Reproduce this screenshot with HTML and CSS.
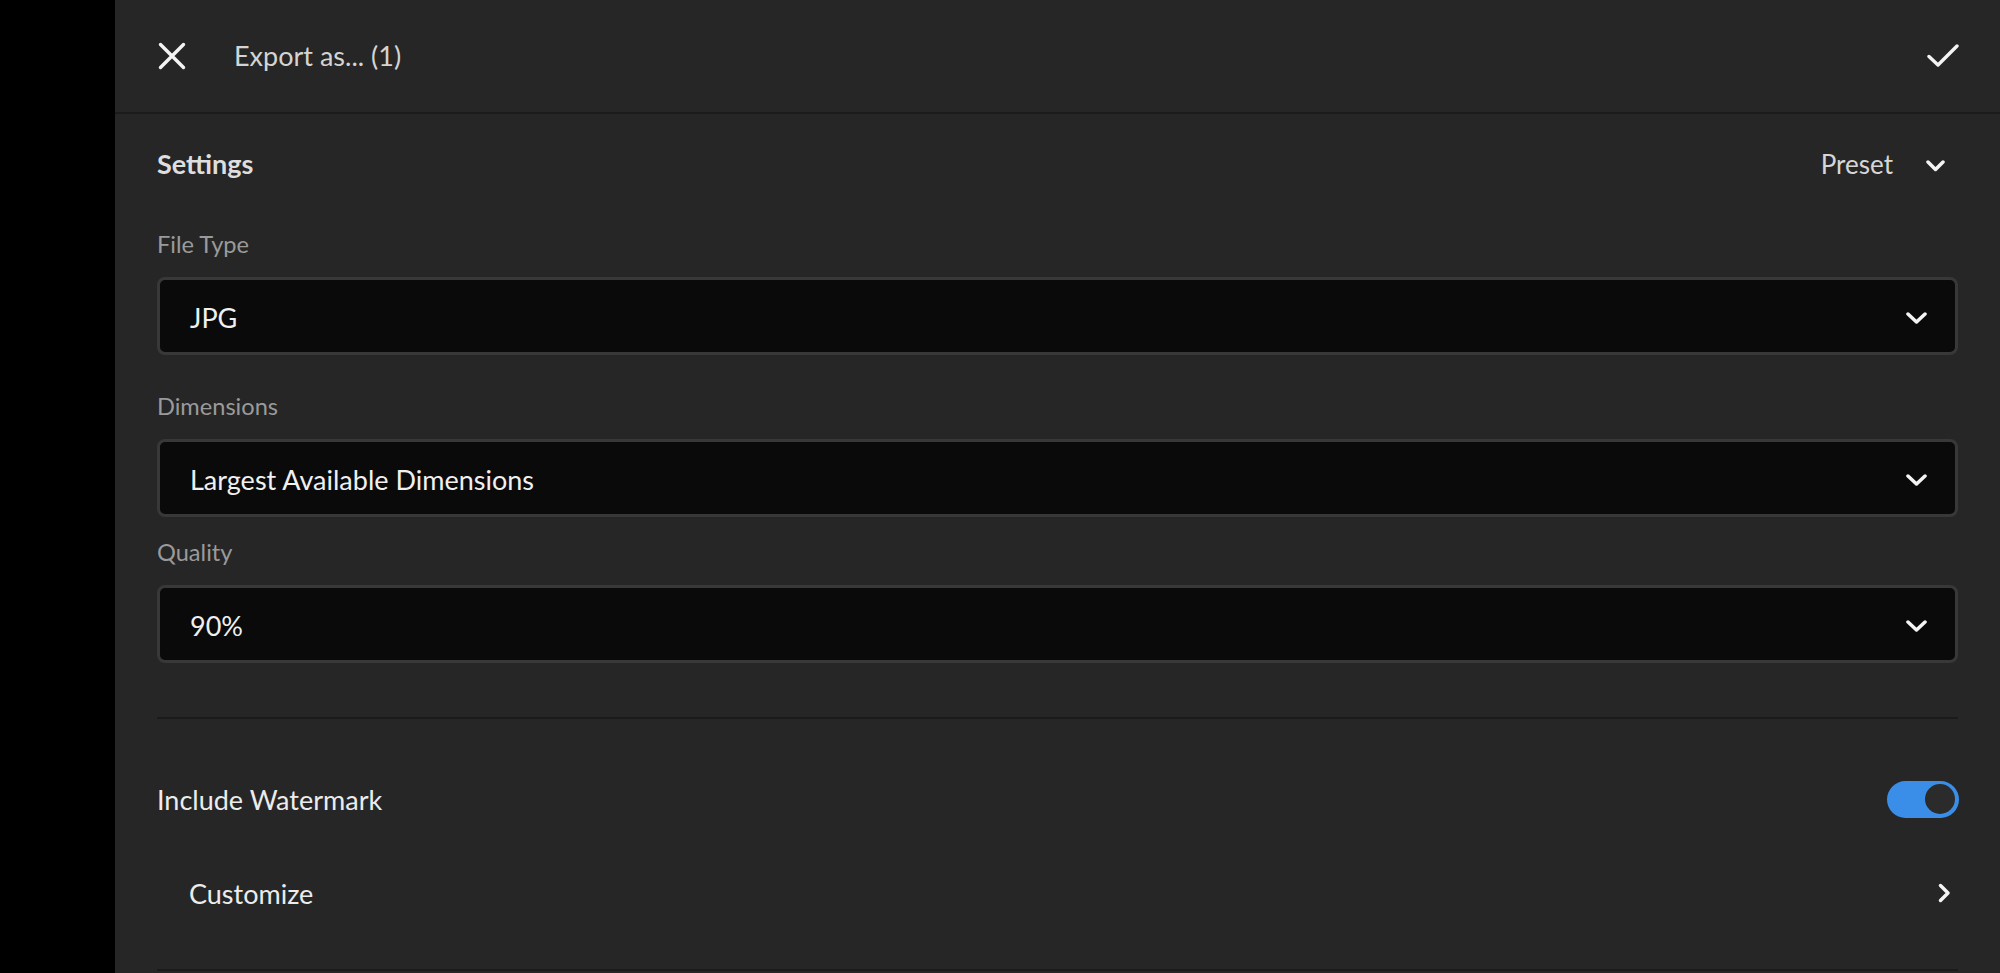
FILE: index.html
```html
<!DOCTYPE html>
<html lang="en">
<head>
<meta charset="utf-8">
<title>Export as</title>
<link rel="stylesheet" href="styles.css">
</head>
<body>
<div class="rail"></div>
<div class="panel">
  <header class="topbar">
    <svg class="icon-close" width="28" height="28" viewBox="0 0 28 28"><path d="M2.5 2.5 L25.5 25.5 M25.5 2.5 L2.5 25.5" fill="none" stroke="#f4f4f4" stroke-width="3.4" stroke-linecap="round"/></svg>
    <span class="title">Export as... (1)</span>
    <svg class="icon-check" width="32" height="24" viewBox="0 0 32 24"><polyline points="2,12.5 11,21 30,2" fill="none" stroke="#f4f4f4" stroke-width="3.4" stroke-linecap="round" stroke-linejoin="round"/></svg>
  </header>

  <main class="content">
    <div class="settings-head">
      <h2 class="settings-title">Settings</h2>
      <div class="preset">
        <span>Preset</span>
        <svg width="19" height="12" viewBox="0 0 19 12"><polyline points="2,2 9.5,9.5 17,2" fill="none" stroke="#f4f4f4" stroke-width="3.5" stroke-linecap="round" stroke-linejoin="round"/></svg>
      </div>
    </div>

    <div class="group group-first">
      <div class="label">File Type</div>
      <div class="select">
        <span>JPG</span>
        <svg width="21" height="12" viewBox="0 0 21 12"><polyline points="2,2 10.5,10 19,2" fill="none" stroke="#f4f4f4" stroke-width="3.5" stroke-linecap="round" stroke-linejoin="round"/></svg>
      </div>
    </div>

    <div class="group group-second">
      <div class="label">Dimensions</div>
      <div class="select">
        <span>Largest Available Dimensions</span>
        <svg width="21" height="12" viewBox="0 0 21 12"><polyline points="2,2 10.5,10 19,2" fill="none" stroke="#f4f4f4" stroke-width="3.5" stroke-linecap="round" stroke-linejoin="round"/></svg>
      </div>
    </div>

    <div class="group group-third">
      <div class="label">Quality</div>
      <div class="select">
        <span>90%</span>
        <svg width="21" height="12" viewBox="0 0 21 12"><polyline points="2,2 10.5,10 19,2" fill="none" stroke="#f4f4f4" stroke-width="3.5" stroke-linecap="round" stroke-linejoin="round"/></svg>
      </div>
    </div>

    <div class="divider divider-mid"></div>

    <div class="row row-toggle">
      <span>Include Watermark</span>
      <div class="toggle"><div class="knob"></div></div>
    </div>

    <div class="row row-link">
      <span>Customize</span>
      <svg width="13" height="20" viewBox="0 0 13 20"><polyline points="2.5,2.5 10,10 2.5,17.5" fill="none" stroke="#f4f4f4" stroke-width="3.5" stroke-linecap="round" stroke-linejoin="round"/></svg>
    </div>

    <div class="divider divider-bottom"></div>
  </main>
</div>
</body>
</html>
```
FILE: styles.css
```css
html, body {
  margin: 0;
  padding: 0;
  height: 100%;
}
body {
  display: flex;
  background: #000;
  font-family: "Lato", "Open Sans", sans-serif;
  color: #ececec;
  overflow: hidden;
}
.rail {
  width: 115px;
  flex: none;
  background: #000;
}
.panel {
  flex: 1;
  background: #262626;
  min-height: 100%;
}
.topbar {
  height: 112px;
  border-bottom: 2px solid #1b1b1b;
  display: flex;
  align-items: center;
  padding: 0 41px 0 43px;
}
.icon-close {
  display: block;
  flex: none;
}
.title {
  margin-left: 48px;
  font-size: 27px;
  line-height: 32px;
  color: #d4d4d4;
}
.icon-check {
  display: block;
  margin-left: auto;
}
.content {
  padding: 0 42px 0 42px;
}
.settings-head {
  height: 100px;
  display: flex;
  align-items: center;
  justify-content: space-between;
}
.settings-title {
  margin: 0;
  font-size: 27px;
  font-weight: 700;
  line-height: 32px;
  color: #dedede;
}
.preset {
  display: flex;
  align-items: center;
  gap: 33px;
  padding-right: 13px;
  font-size: 26px;
  line-height: 32px;
  color: #d6d6d6;
}
.preset svg {
  display: block;
  margin-top: 3px;
}
.group {
  display: flex;
  flex-direction: column;
  gap: 17px;
}
.group-first { margin-top: 14px; }
.group-second { margin-top: 35px; }
.group-third { margin-top: 19px; }
.label {
  font-size: 23.6px;
  line-height: 32px;
  color: #9a9a9a;
}
.select {
  box-sizing: border-box;
  height: 78px;
  border: 3px solid #383838;
  border-radius: 8px;
  background: #0a0a0a;
  display: flex;
  align-items: center;
  justify-content: space-between;
  padding: 2px 28px 0 30px;
  font-size: 27px;
  color: #f0f0f0;
}
.select svg {
  display: block;
  margin-top: 1px;
}
.divider {
  height: 2px;
  background: #1b1b1b;
}
.divider-mid { margin-top: 54px; }
.divider-bottom { margin-top: 39px; }
.row {
  height: 74px;
  display: flex;
  align-items: center;
  justify-content: space-between;
  font-size: 27px;
  color: #ececec;
}
.row-toggle { margin-top: 43px; }
.row-link {
  margin-top: 20px;
  padding: 0 7px 0 32px;
}
.row-link svg { display: block; }
.toggle {
  width: 72px;
  height: 37px;
  border-radius: 19px;
  background: #3a8ee8;
  display: flex;
  align-items: center;
  justify-content: flex-end;
  padding-right: 4px;
  box-sizing: border-box;
  margin-right: -1px;
}
.knob {
  width: 30px;
  height: 30px;
  border-radius: 50%;
  background: #2b2b2b;
}
```
